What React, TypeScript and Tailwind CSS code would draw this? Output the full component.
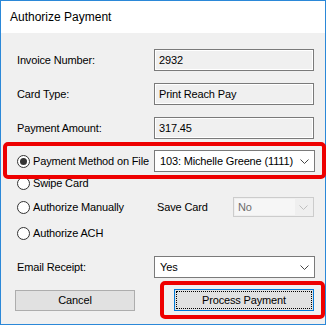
const font = { fontFamily: '"Liberation Sans", Arial, sans-serif' };

function Chevron({ color = "#444" }: { color?: string }) {
  return (
    <svg width="9" height="5" viewBox="0 0 9 5" fill="none">
      <path d="M0.5 0.5 L4.5 4.5 L8.5 0.5" stroke={color} strokeWidth="1" />
    </svg>
  );
}

function Radio({ checked = false }: { checked?: boolean }) {
  return (
    <span className="flex h-[13px] w-[13px] shrink-0 items-center justify-center rounded-full border border-[#333] bg-white">
      {checked && <span className="h-[7px] w-[7px] rounded-full bg-[#333]" />}
    </span>
  );
}

function ReadOnlyBox({ value }: { value: string }) {
  return (
    <div className="flex h-[22px] w-[160px] items-center border border-[#7a7a7a] bg-[#f0f0f0] pl-[4px] shadow-[inset_0_0_0_1px_#ffffff]">
      {value}
    </div>
  );
}

function Select({ value }: { value: string }) {
  return (
    <div className="flex h-[22px] w-[161px] items-center justify-between border border-[#7a7a7a] bg-white pl-[5px] pr-[5px]">
      <span>{value}</span>
      <Chevron />
    </div>
  );
}

function LabelRow({ label, children }: { label: string; children: React.ReactNode }) {
  return (
    <div className="flex items-center">
      <div className="w-[138px] pl-[1px]">{label}</div>
      {children}
    </div>
  );
}

function RadioRow({ label, checked }: { label: string; checked?: boolean }) {
  return (
    <div className="flex items-center gap-[3px] pl-[1px]">
      <Radio checked={checked} />
      <span>{label}</span>
    </div>
  );
}

export default function App() {
  return (
    <div className="h-[327px] w-[328px] bg-white text-[11px] tracking-[-0.15px] text-black" style={font}>
      <div className="relative flex h-[325px] w-[326px] flex-col border border-[#2b88d8] bg-[#f0f0f0]">
        <div className="flex h-[32px] shrink-0 items-center bg-white pl-[9px] text-[12px] tracking-normal">
          Authorize Payment
        </div>

        <div className="flex flex-col pl-[15px]">
          <div className="mt-[16px]">
            <LabelRow label="Invoice Number:">
              <ReadOnlyBox value="2932" />
            </LabelRow>
          </div>
          <div className="mt-[12px]">
            <LabelRow label="Card Type:">
              <ReadOnlyBox value="Print Reach Pay" />
            </LabelRow>
          </div>
          <div className="mt-[12px]">
            <LabelRow label="Payment Amount:">
              <ReadOnlyBox value="317.45" />
            </LabelRow>
          </div>

          <div className="mt-[11px] flex h-[22px] items-center">
            <div className="w-[138px]">
              <RadioRow label="Payment Method on File" checked />
            </div>
            <Select value="103: Michelle Greene (1111)" />
          </div>

          <div className="mt-[3px] flex h-[16px] items-center">
            <RadioRow label="Swipe Card" />
          </div>

          <div className="mt-[6px] flex h-[20px] items-center">
            <div className="w-[141px]">
              <RadioRow label="Authorize Manually" />
            </div>
            <div className="w-[76px]">Save Card</div>
            <div className="flex h-[20px] w-[81px] items-center justify-between border border-[#cccccc] bg-[#efefef] p-[1px] pr-[5px]">
              <span className="flex h-full w-[60px] items-center bg-[#f6f6f6] pl-[3px] text-[#6d6d6d]">No</span>
              <Chevron color="#bfbfbf" />
            </div>
          </div>

          <div className="mt-[8px] flex h-[16px] items-center">
            <RadioRow label="Authorize ACH" />
          </div>

          <div className="mt-[15px]">
            <LabelRow label="Email Receipt:">
              <Select value="Yes" />
            </LabelRow>
          </div>

          <div className="mt-[12px] flex items-start">
            <button className="flex h-[21px] w-[120px] -ml-[1px] items-center justify-center border border-[#adadad] bg-[#e1e1e1]">
              Cancel
            </button>
            <button className="ml-[39px] -mt-[1px] flex h-[22px] w-[140px] items-center justify-center border border-[#0078d7] bg-[#e1e1e1] p-[1px]">
              <span className="flex h-full w-full items-center justify-center border border-dotted border-black">
                Process Payment
              </span>
            </button>
          </div>
        </div>

        <div className="pointer-events-none absolute left-[2px] top-[141px] h-[37px] w-[323px] rounded-[5px] border-[4px] border-[#ee0000]" />
        <div className="pointer-events-none absolute left-[159px] top-[280px] h-[38px] w-[165px] rounded-[5px] border-[4px] border-[#ee0000]" />
      </div>
    </div>
  );
}
